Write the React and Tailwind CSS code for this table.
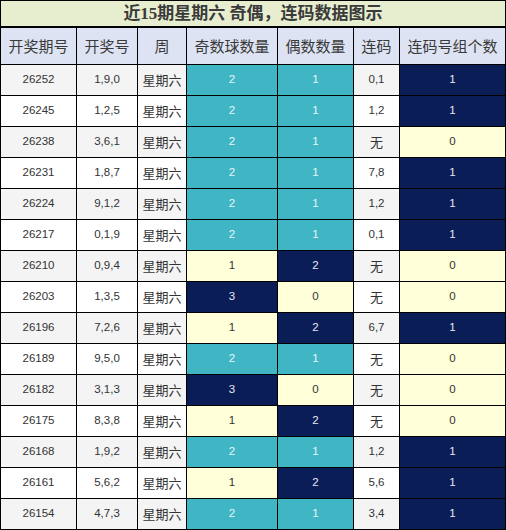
import React from 'react';

const ROWS = [
  ['26252', '1,9,0', 2, 1, '0,1', 1],
  ['26245', '1,2,5', 2, 1, '1,2', 1],
  ['26238', '3,6,1', 2, 1, '无', 0],
  ['26231', '1,8,7', 2, 1, '7,8', 1],
  ['26224', '9,1,2', 2, 1, '1,2', 1],
  ['26217', '0,1,9', 2, 1, '0,1', 1],
  ['26210', '0,9,4', 1, 2, '无', 0],
  ['26203', '1,3,5', 3, 0, '无', 0],
  ['26196', '7,2,6', 1, 2, '6,7', 1],
  ['26189', '9,5,0', 2, 1, '无', 0],
  ['26182', '3,1,3', 3, 0, '无', 0],
  ['26175', '8,3,8', 1, 2, '无', 0],
  ['26168', '1,9,2', 2, 1, '1,2', 1],
  ['26161', '5,6,2', 1, 2, '5,6', 1],
  ['26154', '4,7,3', 2, 1, '3,4', 1],
];

const HEADERS = ['开奖期号', '开奖号', '周', '奇数球数量', '偶数数量', '连码', '连码号组个数'];

const TEAL = 'bg-[#40b5c4] text-[#e8f6f8]';
const NAVY = 'bg-[#0b1d56] text-[#e6e9f2]';
const CREAM = 'bg-[#ffffd9] text-[#333]';

const oddTone = { 2: TEAL, 1: CREAM, 3: NAVY };
const evenTone = { 1: TEAL, 2: NAVY, 0: CREAM };
const pairTone = { 1: NAVY, 0: CREAM };

const NUM = "font-['Liberation_Sans','Noto_Sans_CJK_SC',sans-serif] text-[11.5px]";
const CJK = "font-['Noto_Sans_CJK_SC',sans-serif]";

const Cell = ({ tone, className = '', children }) => (
  <div className={`h-[30px] flex items-center justify-center ${tone} ${className}`}>{children}</div>
);

export default function App() {
  return (
    <div className="w-[506px] h-[530px] bg-black p-px flex flex-col">
      <div className="h-[25px] bg-[#e6eecf] flex items-center justify-center font-bold text-[17px] text-[#3a3a3a] font-['Liberation_Serif','Noto_Sans_CJK_SC',sans-serif] leading-none">
        近15期星期六 奇偶，连码数据图示
      </div>
      <div className="mt-[2px] grid grid-cols-[75px_60px_48px_90px_75px_45px_105px] gap-px">
        {HEADERS.map((h) => (
          <div key={h} className={`h-[36px] bg-[#dde3f3] flex items-center justify-center text-[15px] text-[#3a3a3a] ${CJK}`}>
            {h}
          </div>
        ))}
        {ROWS.map(([issue, nums, odd, even, pair, pairCount], i) => {
          const base = i % 2 === 0 ? 'bg-[#f4f4f4] text-[#333]' : 'bg-white text-[#333]';
          return (
            <React.Fragment key={issue}>
              <Cell tone={base} className={NUM}>{issue}</Cell>
              <Cell tone={base} className={NUM}>{nums}</Cell>
              <Cell tone={base} className={`${CJK} text-[13px] text-[#222]`}>星期六</Cell>
              <Cell tone={oddTone[odd]} className={NUM}>{odd}</Cell>
              <Cell tone={evenTone[even]} className={NUM}>{even}</Cell>
              <Cell tone={base} className={pair === '无' ? `${CJK} text-[13px]` : NUM}>{pair}</Cell>
              <Cell tone={pairTone[pairCount]} className={NUM}>{pairCount}</Cell>
            </React.Fragment>
          );
        })}
      </div>
    </div>
  );
}
